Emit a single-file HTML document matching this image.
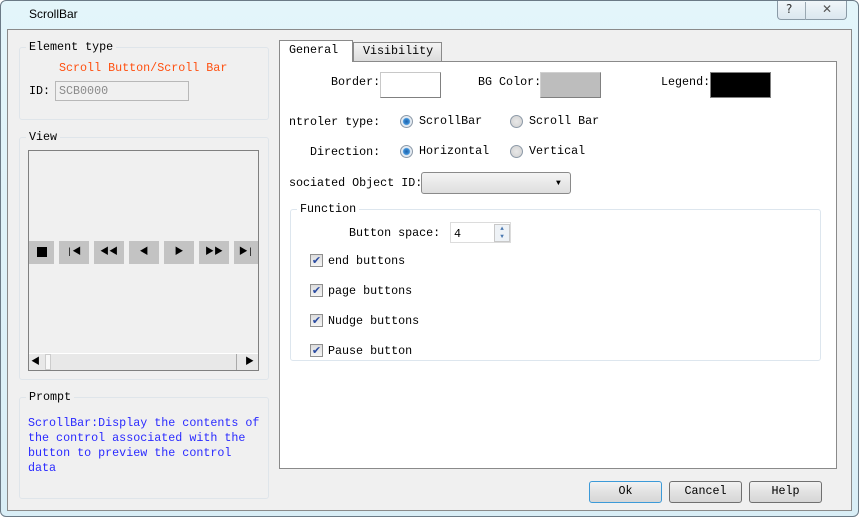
<!DOCTYPE html>
<html><head><style>
*{margin:0;padding:0;box-sizing:border-box}
body{width:859px;height:517px;overflow:hidden;background:#fff;font-family:"Liberation Mono","Noto Sans CJK SC",monospace;font-size:11.7px;color:#000;position:relative}
.a{position:absolute;white-space:nowrap}
.grp{position:absolute;border:1px solid #dfe5ea;border-radius:3px}
.lg{position:absolute;background:#f0f0f0;padding:0 3px;line-height:14px}
.lgw{background:#fff}
.btn{position:absolute;border:1px solid #707070;border-radius:3px;background:linear-gradient(#f2f2f2,#e2e2e2 50%,#d6d6d6);text-align:center;line-height:19px}
.vb{position:absolute;top:241px;width:30px;height:23px;background:#c3c3c3;font-size:9px;text-align:center;line-height:23px;color:#000}
.rad{position:absolute;width:13px;height:13px;border-radius:50%;border:1px solid #8d9aa8;background:radial-gradient(circle,#e8e8e8,#d0d0d0)}
.rad.on{background:radial-gradient(circle,#1e5fa8 0,#3a8fd8 3px,#e8eef4 4px,#dde3ea)}
.chk{position:absolute;width:13px;height:13px;border:1px solid #8f8f8f;background:linear-gradient(#dcdcdc,#f4f4f4);color:#2a4aa0;font-size:11px;line-height:11px;text-align:center;font-family:"DejaVu Sans",sans-serif}
</style></head><body>
<div class="a" style="left:0;top:0;width:859px;height:517px;border:1px solid #6b7a86;border-radius:6px;background:linear-gradient(#e3f5fa,#d9eef6)"></div>
<div class="a" style="left:29px;top:7px;font-family:'Liberation Sans',sans-serif;font-size:12px">ScrollBar</div>
<div class="a" style="left:777px;top:1px;width:70px;height:19px;border:1px solid #8a9aa6;border-top:none;border-radius:0 0 4px 4px;background:linear-gradient(#f0f6f9,#dbe7ef)"></div>
<div class="a" style="left:805px;top:2px;width:1px;height:18px;background:#9aa8b2"></div>
<div class="a" style="left:786px;top:2px;font-family:'DejaVu Sans';font-size:12px;color:#333">?</div>
<div class="a" style="left:822px;top:2px;font-family:'DejaVu Sans';font-size:12px;color:#555">✕</div>
<div class="a" style="left:7px;top:29px;width:845px;height:482px;background:#f0f0f0;border:1px solid #8a8a8a"></div>

<div class="grp" style="left:19px;top:47px;width:250px;height:73px"></div>
<div class="lg" style="left:26px;top:40px">Element type</div>
<div class="a" style="left:59px;top:61px;color:#ff5010">Scroll Button/Scroll Bar</div>
<div class="a" style="left:29px;top:84px">ID:</div>
<div class="a" style="left:55px;top:81px;width:134px;height:20px;border:1px solid #b8b8b8;background:#f0f0f0;color:#8a8a8a;padding:2px 3px">SCB0000</div>

<div class="grp" style="left:19px;top:137px;width:250px;height:243px"></div>
<div class="lg" style="left:26px;top:130px">View</div>
<div class="a" style="left:28px;top:150px;width:231px;height:221px;border:1px solid #808080;background:#f0f0f0"></div>
<div class="vb" style="left:29px;width:25px"><span style="display:inline-block;width:10px;height:10px;background:#000;vertical-align:middle"></span></div>
<div class="vb" style="left:59px">|◀</div>
<div class="vb" style="left:94px">◀◀</div>
<div class="vb" style="left:129px">◀</div>
<div class="vb" style="left:164px">▶</div>
<div class="vb" style="left:199px">▶▶</div>
<div class="vb" style="left:234px;width:24px">▶|</div>
<div class="a" style="left:29px;top:353px;width:229px;height:17px;background:#e8e8e8;border-top:1px solid #fff"></div>
<div class="a" style="left:31px;top:354px;font-size:9px">◀</div>
<div class="a" style="left:45px;top:354px;width:6px;height:16px;background:#f8f8f8;border:1px solid #ccc"></div>
<div class="a" style="left:236px;top:354px;width:22px;height:16px;border-left:1px solid #aaa;font-size:9px;padding-left:8px;line-height:16px">▶</div>

<div class="grp" style="left:19px;top:397px;width:250px;height:102px"></div>
<div class="lg" style="left:26px;top:390px">Prompt</div>
<div class="a" style="left:28px;top:416px;color:#2a2aff;line-height:15px;white-space:pre">ScrollBar:Display the contents of
the control associated with the
button to preview the control
data</div>

<div class="a" style="left:353px;top:42px;width:89px;height:20px;border:1px solid #8a8a8a;background:linear-gradient(#f4f4f4,#dcdcdc);padding:1px 0 0 9px">Visibility</div>
<div class="a" style="left:279px;top:61px;width:558px;height:408px;background:#fff;border:1px solid #8a8a8a"></div>
<div class="a" style="left:279px;top:40px;width:74px;height:22px;border:1px solid #8a8a8a;border-bottom:none;background:#fff;padding:2px 0 0 9px">General</div>

<div class="a" style="left:331px;top:75px">Border:</div>
<div class="a" style="left:380px;top:72px;width:61px;height:26px;background:#fff;border:1px solid #c8c8c8;border-right-color:#808080;border-bottom-color:#808080"></div>
<div class="a" style="left:478px;top:75px">BG Color:</div>
<div class="a" style="left:540px;top:72px;width:61px;height:26px;background:#bdbdbd;border:1px solid #d0d0d0;border-right-color:#808080;border-bottom-color:#808080"></div>
<div class="a" style="left:661px;top:75px">Legend:</div>
<div class="a" style="left:710px;top:72px;width:61px;height:26px;background:#000;border:1px solid #808080"></div>

<div class="a" style="left:289px;top:115px">ntroler type:</div>
<div class="rad on" style="left:400px;top:115px"></div>
<div class="a" style="left:419px;top:114px">ScrollBar</div>
<div class="rad" style="left:510px;top:115px"></div>
<div class="a" style="left:529px;top:114px">Scroll Bar</div>
<div class="a" style="left:310px;top:145px">Direction:</div>
<div class="rad on" style="left:400px;top:145px"></div>
<div class="a" style="left:419px;top:144px">Horizontal</div>
<div class="rad" style="left:510px;top:145px"></div>
<div class="a" style="left:529px;top:144px">Vertical</div>
<div class="a" style="left:289px;top:176px">sociated Object ID:</div>
<div class="a" style="left:421px;top:172px;width:150px;height:22px;border:1px solid #8a8a8a;border-radius:3px;background:linear-gradient(#f4f4f4,#dedede)"></div>
<div class="a" style="left:556px;top:179px;font-size:8px">▼</div>

<div class="grp" style="left:290px;top:209px;width:531px;height:152px;border-color:#dde6ee"></div>
<div class="lg lgw" style="left:297px;top:202px">Function</div>
<div class="a" style="left:349px;top:226px">Button space:</div>
<div class="a" style="left:450px;top:222px;width:61px;height:21px;border:1px solid #dcdcdc;padding:4px 0 0 3px">4</div>
<div class="a" style="left:494px;top:224px;width:16px;height:18px;border:1px solid #c8c8c8;background:#eef2f6;font-size:6px;line-height:8px;text-align:center;color:#4a78b0">▲<br>▼</div>
<div class="chk" style="left:310px;top:254px">✔</div><div class="a" style="left:328px;top:254px">end buttons</div>
<div class="chk" style="left:310px;top:284px">✔</div><div class="a" style="left:328px;top:284px">page buttons</div>
<div class="chk" style="left:310px;top:314px">✔</div><div class="a" style="left:328px;top:314px">Nudge buttons</div>
<div class="chk" style="left:310px;top:344px">✔</div><div class="a" style="left:328px;top:344px">Pause button</div>

<div class="btn" style="left:589px;top:481px;width:73px;height:22px;border-color:#3c9ad8">Ok</div>
<div class="btn" style="left:669px;top:481px;width:73px;height:22px">Cancel</div>
<div class="btn" style="left:749px;top:481px;width:73px;height:22px">Help</div>
</body></html>
